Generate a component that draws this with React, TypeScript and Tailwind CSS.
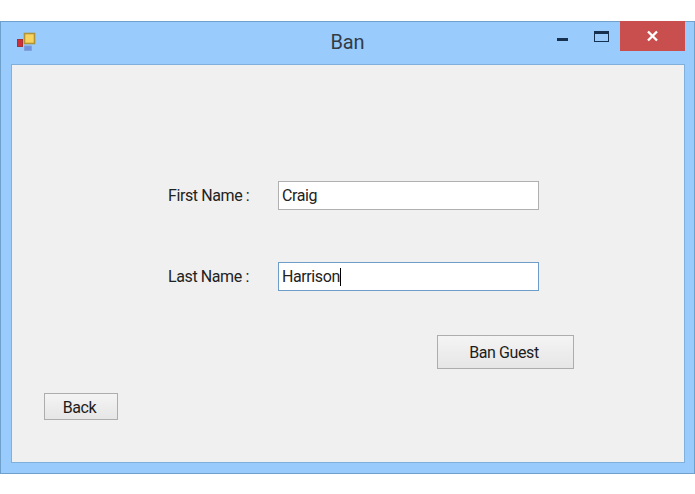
const font = { fontFamily: 'Roboto, "Open Sans", sans-serif' };

const WinButton = ({ label, className }: { label: string; className: string }) => {
  return (
    <div
      className={
        "flex items-center justify-center border border-[#adadad] bg-gradient-to-b from-[#f4f4f4] to-[#e6e6e6] pr-[3px] pt-[2px] text-[16px] tracking-[-0.4px] text-[#1c1c1c] " +
        className
      }
    >
      {label}
    </div>
  );
};

const App = () => {
  return (
    <div className="h-[494px] w-[695px] overflow-hidden bg-white pt-[21px]" style={font}>
      <div className="flex h-[453px] flex-col border border-[#6f9fcb] bg-[#99ccfd] pb-[10px] pl-[10px] pr-[9px]">
        {/* title bar */}
        <div className="-ml-[10px] -mr-[9px] grid h-[42px] shrink-0 grid-cols-[1fr_auto_1fr]">
          <div className="flex pl-[15px] pt-[10px]">
            <svg width="20" height="20" viewBox="0 0 20 20">
              <rect x="1.5" y="7.5" width="5" height="7" fill="#cf2f36" stroke="#a33338" strokeWidth="1" />
              <rect x="8.5" y="1.5" width="10" height="10" fill="#f8d35e" stroke="#b0943a" strokeWidth="1.6" />
              <rect x="8.5" y="14" width="7" height="4.5" fill="#6f93e0" stroke="#7f9dd4" strokeWidth="0.8" />
            </svg>
          </div>
          <div className="pt-[6px] text-[20px] leading-[28px] tracking-[-0.2px] text-[#333c46]">Ban</div>
          <div className="flex justify-end pr-[9px]">
            <div className="flex h-[29px] w-[128px] items-start">
              <div className="mt-[16px] h-[3px] w-[11px] bg-[#17304d]" />
              <div className="ml-[26px] mt-[9px] h-[11px] w-[15px] border border-t-[3px] border-[#17304d]" />
              <div className="-mt-px ml-[11px] flex h-[30px] w-[66px] items-center justify-center bg-[#c94f4f]">
                <svg width="13" height="12" viewBox="0 0 13 12">
                  <path d="M2 1.5 L11 10.5 M11 1.5 L2 10.5" stroke="#ffffff" strokeWidth="2.4" fill="none" />
                </svg>
              </div>
            </div>
          </div>
        </div>

        {/* client area */}
        <div className="flex flex-1 flex-col border border-[#7fb0dc] bg-[#f0f0f0] pt-[116px]">
          <div className="flex items-center pl-[156px]">
            <div className="w-[110px] text-[16px] tracking-[-0.4px] text-[#222]">First Name :</div>
            <div className="flex h-[29px] w-[261px] items-center border border-[#b0b0b0] bg-white pl-[3px] text-[16px] tracking-[-0.4px] text-[#222]">
              Craig
            </div>
          </div>
          <div className="mt-[52px] flex items-center pl-[156px]">
            <div className="w-[110px] text-[16px] tracking-[-0.4px] text-[#222]">Last Name :</div>
            <div className="flex h-[29px] w-[261px] items-center border border-[#6c9ec9] bg-white pl-[3px] text-[16px] tracking-[-0.4px] text-[#222]">
              Harrison
              <span className="h-[18px] w-px bg-black" />
            </div>
          </div>
          <div className="mt-[44px] pl-[425px]">
            <WinButton label="Ban Guest" className="h-[34px] w-[137px]" />
          </div>
          <div className="mt-[24px] pl-[32px]">
            <WinButton label="Back" className="h-[27px] w-[74px]" />
          </div>
        </div>
      </div>
    </div>
  );
};

export default App;
